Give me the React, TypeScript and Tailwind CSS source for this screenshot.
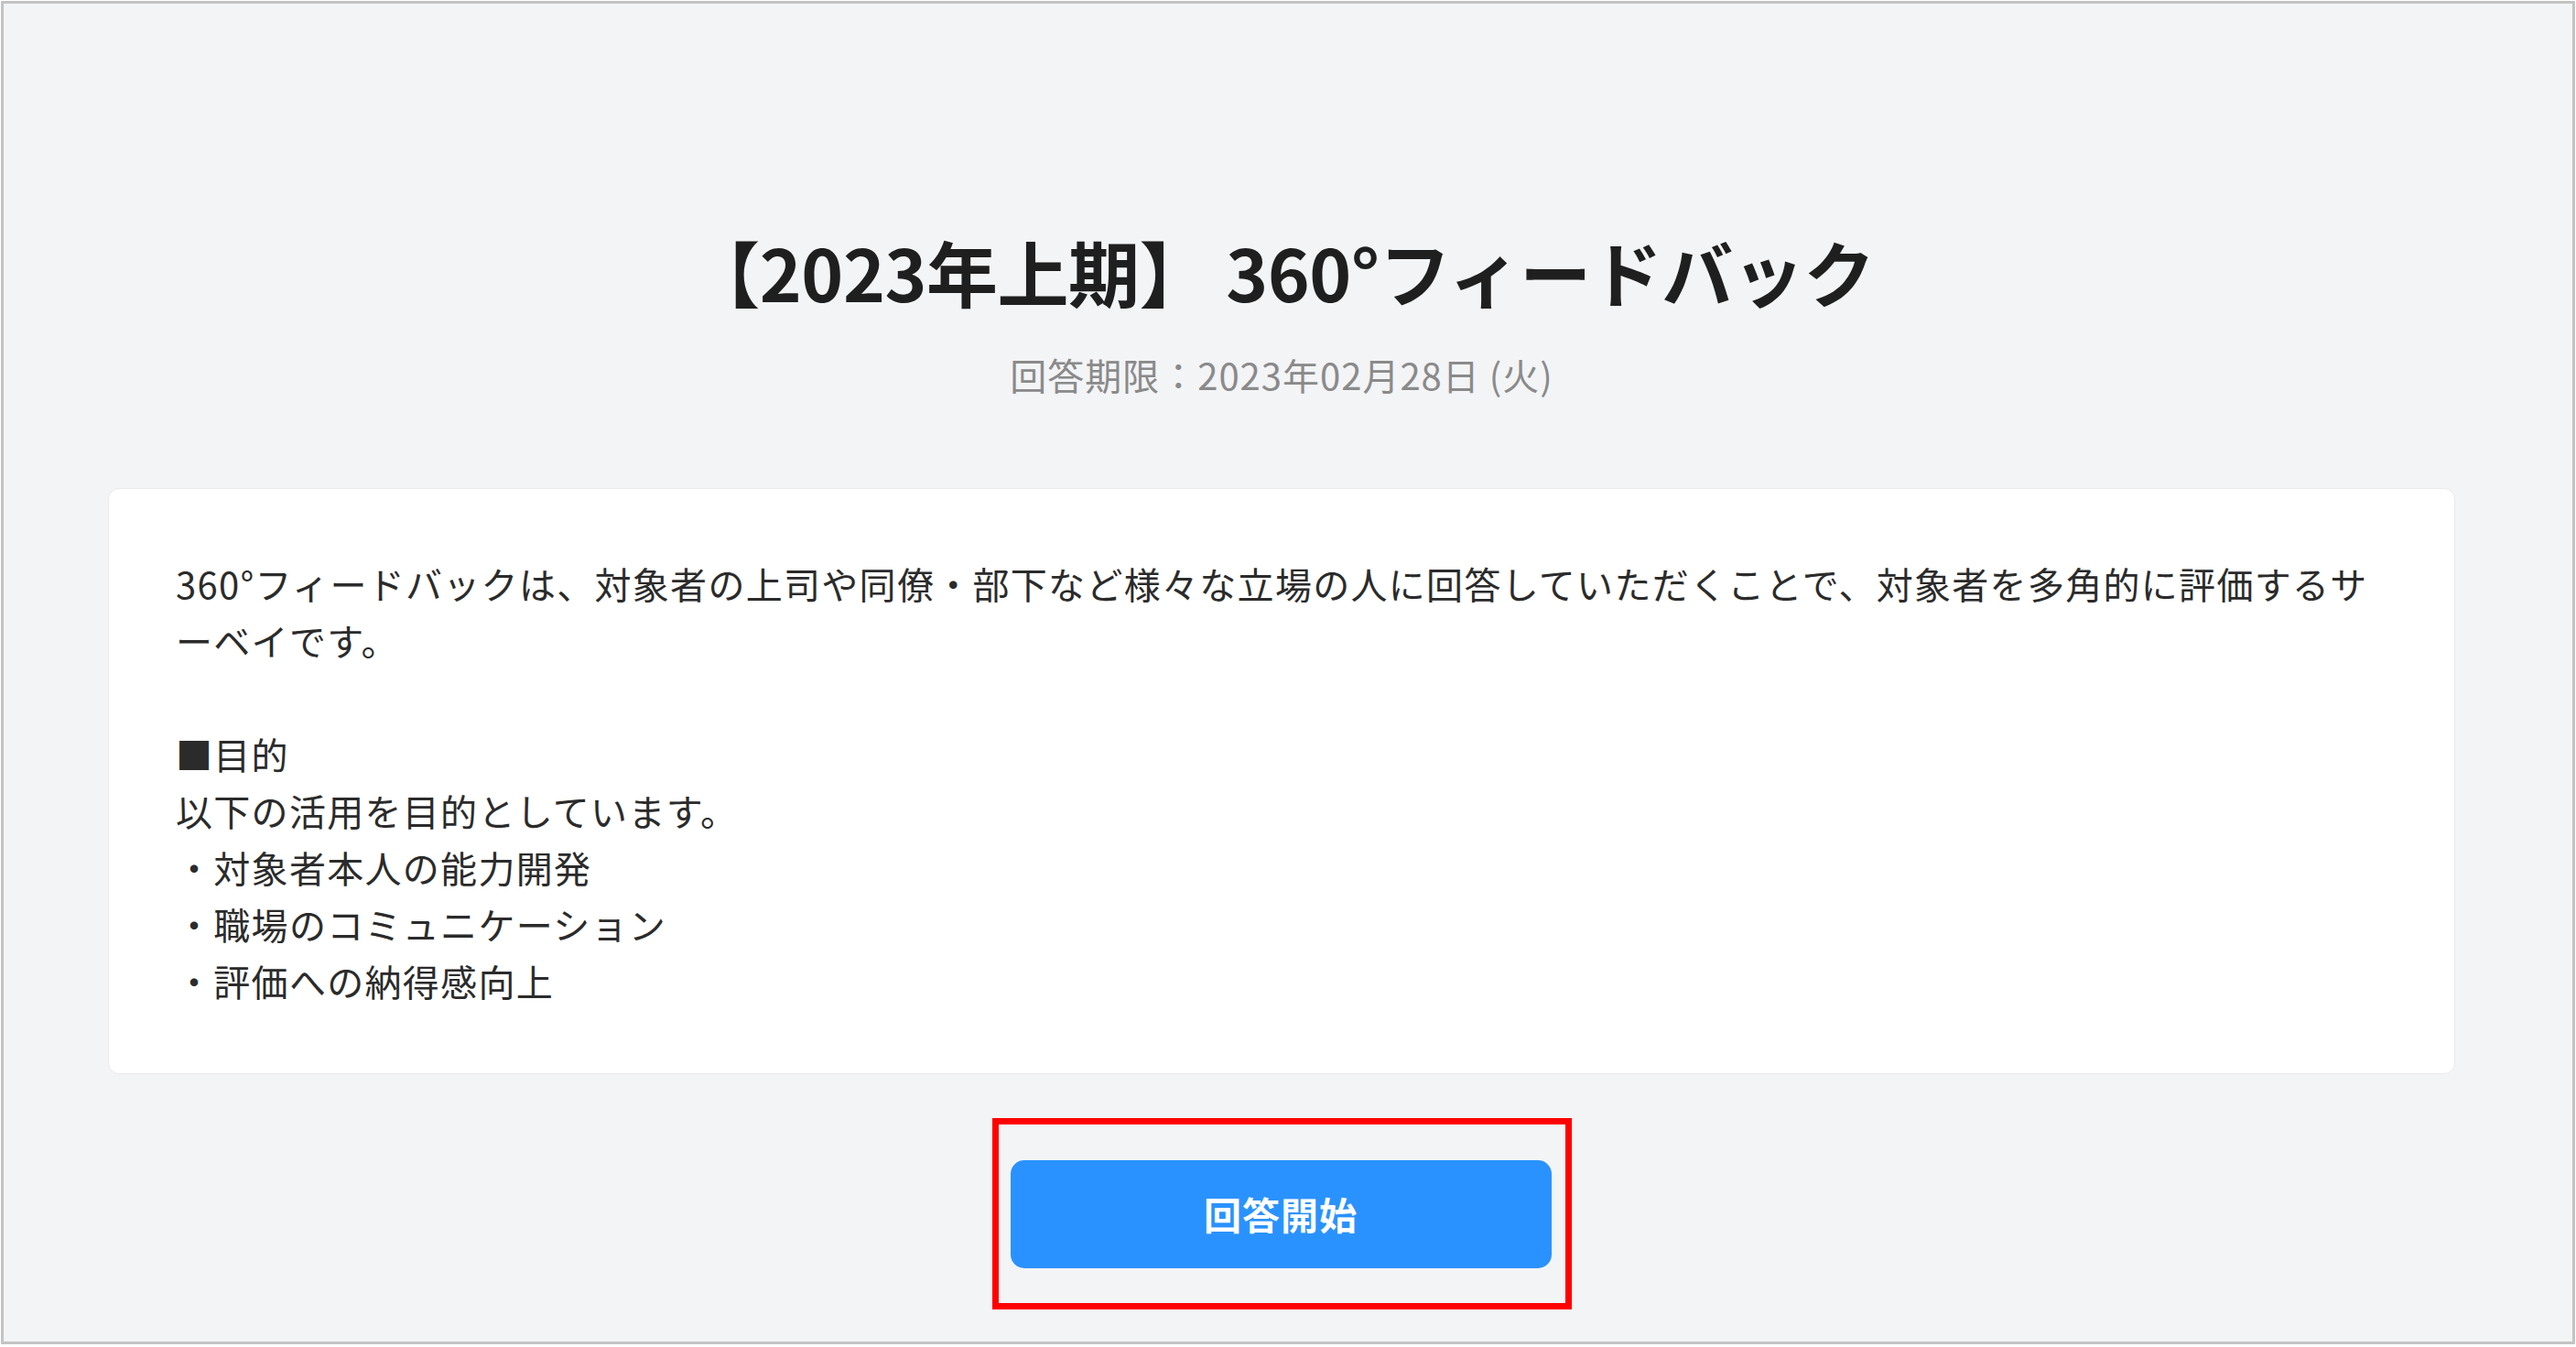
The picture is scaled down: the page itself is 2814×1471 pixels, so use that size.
import React from 'react';

const FONT = { fontFamily: '"Noto Sans CJK JP", "Noto Sans", sans-serif' };

const purposes = ['・対象者本人の能力開発', '・職場のコミュニケーション', '・評価への納得感向上'];

export default function App() {
  return (
    <div className="w-[2814px] h-[1471px] p-px" style={FONT}>
      <div className="h-[1467px] w-[2812px] border-[3px] border-[#c3c3c3] bg-[#f3f4f6] flex flex-col items-center pt-[233px] pl-[114px] pr-[128px]">
        {/* Header */}
        <h1 className="text-[78px] leading-[118px] font-bold text-[#1f1f1f] tracking-[-0.5px]">
          【2023年上期】 360°フィードバック
        </h1>
        <div className="text-[40px] leading-[60px] text-[#8a8a8a] mt-[24px] tracking-[1px]">
          回答期限：2023年02月28日 (火)
        </div>

        {/* Description card */}
        <div className="w-full mt-[94px] bg-white rounded-[12px] border border-[#eaeaec] pl-[73px] pr-[50px] pt-[72px] pb-[70px] text-[40px] leading-[62px] text-[#2b2b2b] tracking-[1.3px]">
          <p>
            360°フィードバックは、対象者の上司や同僚・部下など様々な立場の人に回答していただくことで、対象者を多角的に評価するサ
            <br />
            ーベイです。
          </p>
          <p className="h-[62px]"></p>
          <p>■目的</p>
          <p>以下の活用を目的としています。</p>
          {purposes.map((p) => (
            <p key={p}>{p}</p>
          ))}
        </div>

        {/* Start button (highlighted) */}
        <div className="mt-[48px] border-[7px] border-[#ff0000] pl-[13px] pr-[15px] pt-[39px] pb-[38px]">
          <button className="w-[591px] h-[118px] rounded-[15px] bg-[#2a92fe] text-white text-[41px] font-bold tracking-[1px]">
            回答開始
          </button>
        </div>
      </div>
    </div>
  );
}
